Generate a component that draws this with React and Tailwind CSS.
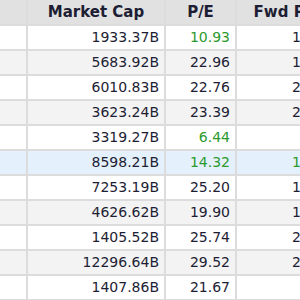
const rows = [
  { cap: '1933.37B', pe: '10.93', fwd: '18.41', peGood: true },
  { cap: '5683.92B', pe: '22.96', fwd: '19.87' },
  { cap: '6010.83B', pe: '22.76', fwd: '24.05' },
  { cap: '3623.24B', pe: '23.39', fwd: '21.62' },
  { cap: '3319.27B', pe: '6.44', fwd: '7.18', peGood: true },
  { cap: '8598.21B', pe: '14.32', fwd: '12.90', peGood: true, fwdGood: true, active: true },
  { cap: '7253.19B', pe: '25.20', fwd: '17.33' },
  { cap: '4626.62B', pe: '19.90', fwd: '16.75' },
  { cap: '1405.52B', pe: '25.74', fwd: '22.14' },
  { cap: '12296.64B', pe: '29.52', fwd: '26.08' },
  { cap: '1407.86B', pe: '21.67', fwd: '9.85' },
]

export default function App() {
  return (
    <div className="w-[300px] h-[300px] overflow-hidden bg-[#dcdcdc] font-['DejaVu_Sans',sans-serif] text-[14px] text-[#1d1d33]">
      <div className="grid grid-cols-[26px_136px_69px_100px] gap-[2px] w-max">
        <div className="h-[24px] bg-[#e1e1e1]" />
        <div className="h-[24px] bg-[#e1e1e1] font-bold text-[15px] flex items-center justify-center">Market Cap</div>
        <div className="h-[24px] bg-[#e1e1e1] font-bold text-[15px] flex items-center justify-center">P/E</div>
        <div className="h-[24px] bg-[#e1e1e1] font-bold text-[15px] flex items-center justify-center whitespace-nowrap">Fwd P/E</div>
        {rows.map((r, i) => {
          const bg = r.active ? 'bg-[#e4f0fb]' : i % 2 === 1 ? 'bg-[#f3f3f3]' : 'bg-white'
          return [
            <div key={i + 'a'} className={`h-[23px] ${bg}`} />,
            <div key={i + 'b'} className={`h-[23px] ${bg} flex items-center justify-end pr-[5px]`}>{r.cap}</div>,
            <div key={i + 'c'} className={`h-[23px] ${bg} flex items-center justify-end pr-[5px] ${r.peGood ? 'text-[#2c9a2c]' : ''}`}>{r.pe}</div>,
            <div key={i + 'd'} className={`h-[23px] ${bg} flex items-center justify-end pr-[5px] ${r.fwdGood ? 'text-[#2c9a2c]' : ''}`}>{r.fwd}</div>,
          ]
        })}
      </div>
    </div>
  )
}
